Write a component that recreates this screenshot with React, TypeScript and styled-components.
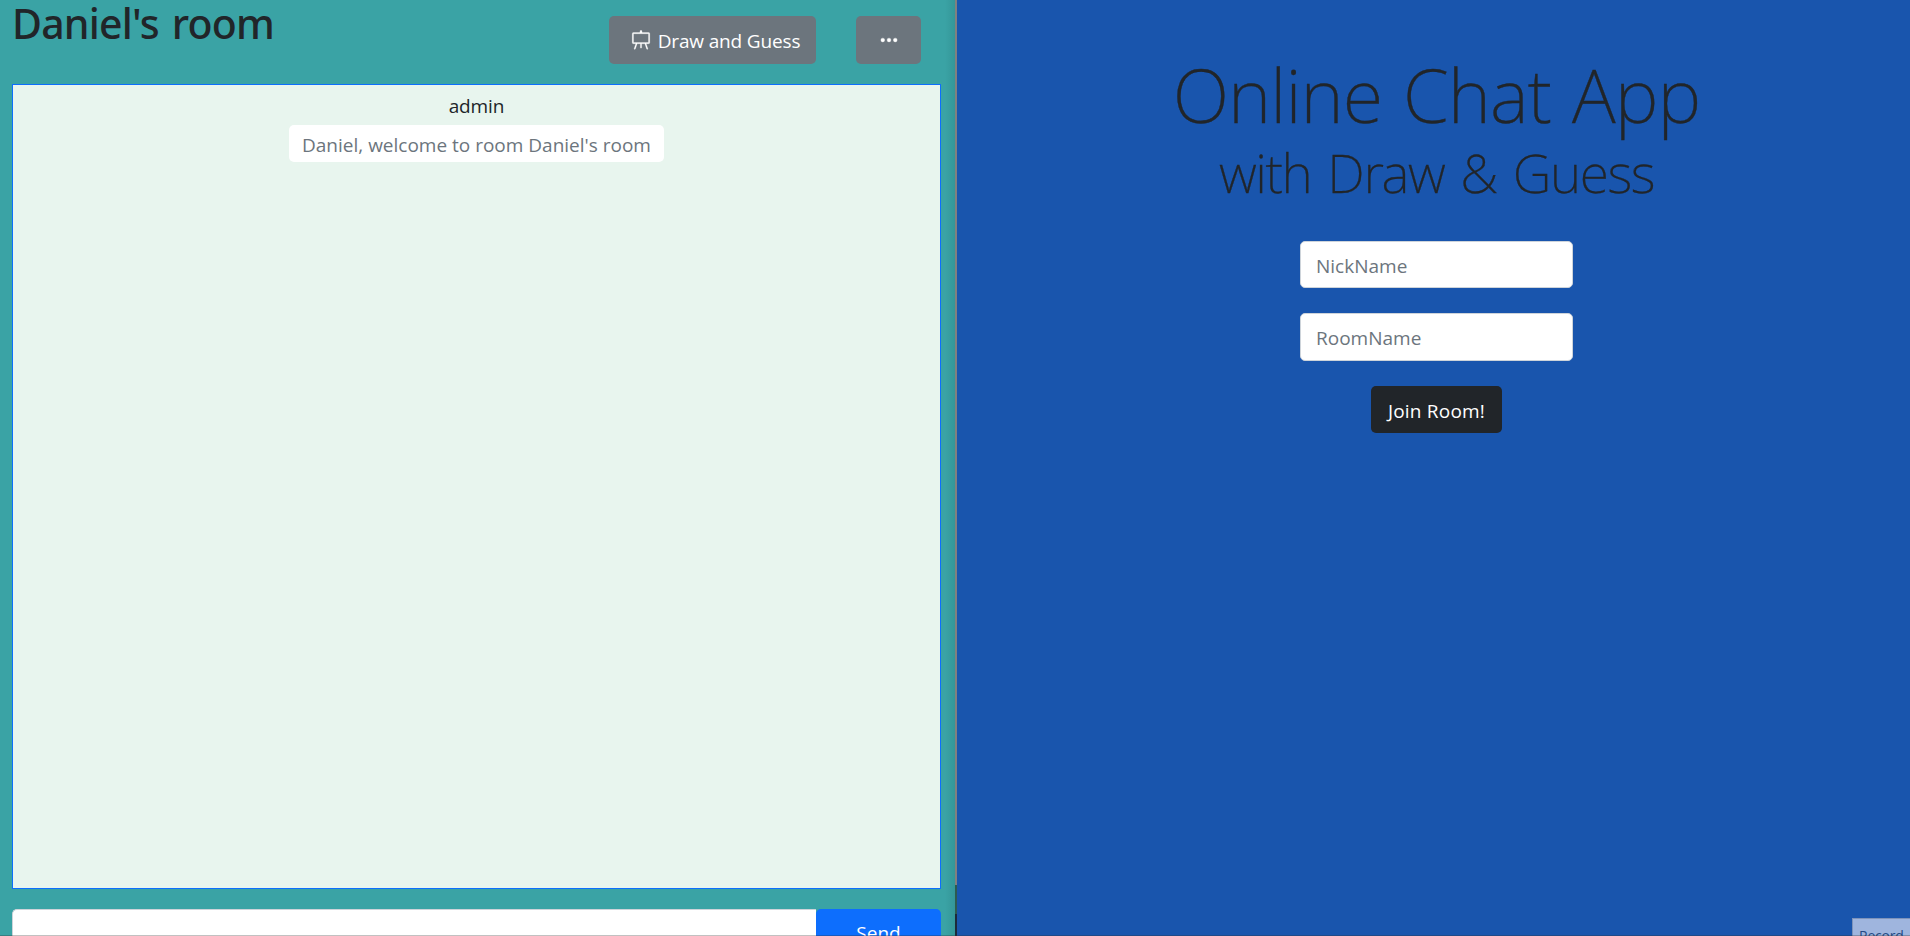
import React from 'react';
import styled, { createGlobalStyle } from 'styled-components';

const GlobalStyle = createGlobalStyle`
  *, *::before, *::after { box-sizing: border-box; }
  body {
    margin: 0;
    overflow: hidden;
    font-family: "Open Sans", "Noto Sans", sans-serif;
    font-size: 19px;
    line-height: 30px;
    color: #212529;
  }
  button, input { font: inherit; letter-spacing: inherit; }
`;

const Screen = styled.div`
  position: relative;
  display: flex;
  width: 1910px;
  height: 936px;
  overflow: hidden;
`;

const ChatPane = styled.section`
  display: flex;
  flex-direction: column;
  flex: none;
  width: 955px;
  height: 936px;
  padding: 0 14px 0 12px;
  background: linear-gradient(to right, transparent 945px, rgba(0, 40, 40, 0.1)) #3aa3a5;
`;

const ChatHeader = styled.header`
  display: flex;
  flex: none;
  height: 84px;
`;

const RoomTitle = styled.h1`
  flex: 1;
  margin: 0;
  font-family: "Noto Sans", "Open Sans", sans-serif;
  font-size: 41px;
  font-weight: 500;
  line-height: 46px;
  letter-spacing: -0.8px;
  word-spacing: 3px;
  white-space: nowrap;
`;

const HeaderButton = styled.button<{ $width: number }>`
  display: flex;
  align-items: center;
  justify-content: center;
  gap: 7px;
  width: ${(p) => p.$width}px;
  height: 48px;
  margin: 16px 0 0;
  padding: 0;
  border: 0;
  border-radius: 5px;
  background: #6c757d;
  color: #fff;
  white-space: nowrap;
`;

const ButtonLabel = styled.span`
  padding-top: 2px;
  letter-spacing: -0.15px;
`;

const DrawButton = styled(HeaderButton)`
  padding-left: 6px;
`;

const HeaderActions = styled.div`
  display: flex;
  gap: 40px;
  padding-right: 20px;
`;

const Messages = styled.div`
  display: flex;
  flex-direction: column;
  align-items: center;
  flex: none;
  height: 805px;
  padding-top: 6px;
  border: 1px solid #0d6efd;
  background: #e8f5ee;
`;

const Sender = styled.div`
  height: 34px;
  letter-spacing: -0.1px;
`;

const Bubble = styled.div`
  width: 375px;
  height: 37px;
  border-radius: 5px;
  background: #fff;
  color: #6c757d;
  line-height: 40px;
  text-align: center;
  white-space: nowrap;
`;

const Composer = styled.form`
  display: flex;
  flex: none;
  height: 48px;
  margin-top: 20px;
`;

const MessageInput = styled.input`
  flex: 1;
  min-width: 0;
  border: 1px solid #ced4da;
  border-right: 0;
  border-radius: 5px 0 0 5px;
  background: #fff;
  outline: 0;
`;

const SendButton = styled.button`
  width: 125px;
  padding: 0;
  border: 0;
  border-radius: 5px;
  background: #0d6efd;
  color: #fff;
`;

const Divider = styled.div`
  flex: none;
  width: 2px;
  background: linear-gradient(#808080 885px, #2d5a50 885px 914px, #1c2a3a 914px);
`;

const JoinPane = styled.section`
  display: flex;
  flex-direction: column;
  align-items: center;
  flex: 1;
  padding: 50px 0 0 6px;
  background: #1955ad;
`;

const AppTitle = styled.h1`
  margin: 0;
  font-family: "Noto Sans", "Open Sans", sans-serif;
  font-size: 74px;
  font-weight: 200;
  line-height: 90px;
  letter-spacing: -0.9px;
  word-spacing: 2.5px;
  white-space: nowrap;
  -webkit-text-stroke: 0.4px #212529;
`;

const AppSubtitle = styled.h2`
  margin: 0 0 29px;
  font-family: "Noto Sans", "Open Sans", sans-serif;
  font-size: 53.5px;
  font-weight: 200;
  line-height: 65px;
  letter-spacing: -1.4px;
  word-spacing: 3.5px;
  white-space: nowrap;
  -webkit-text-stroke: 0.3px #212529;
`;

const JoinForm = styled.form`
  display: flex;
  flex-direction: column;
  align-items: center;
  gap: 25px;
  margin-top: 7px;
`;

const Field = styled.input<{ $height: number }>`
  width: 273px;
  height: ${(p) => p.$height}px;
  padding: 2px 15px 0;
  border: 1px solid #ced4da;
  border-radius: 5px;
  background: #fff;
  outline: 0;
  &::placeholder { color: #6c757d; opacity: 1; }
`;

const JoinButton = styled.button`
  width: 131px;
  height: 47px;
  padding: 2px 0 0;
  border: 0;
  border-radius: 5px;
  background: #212529;
  color: #fff;
  letter-spacing: 0.2px;
  white-space: nowrap;
`;

const RecordTag = styled.div`
  position: absolute;
  left: 1852px;
  top: 918px;
  width: 58px;
  height: 18px;
  padding: 6px 0 0 6px;
  overflow: hidden;
  border: solid #7d93bb;
  border-width: 1px 0 0 1px;
  background: #9fb5de;
  color: #244a85;
  font-size: 14px;
  line-height: 22px;
  letter-spacing: -0.2px;
`;

const BottomEdge = styled.div`
  position: absolute;
  left: 0;
  right: 0;
  bottom: 0;
  height: 1px;
  background: rgba(50, 50, 50, 0.3);
`;

const EaselIcon = () => (
  <svg width="20" height="20" viewBox="0 0 16 16" fill="currentColor" stroke="currentColor" strokeWidth="0.2">
    <path d="M8 0a.5.5 0 0 1 .473.337L9.046 2H14a1 1 0 0 1 1 1v7a1 1 0 0 1-1 1h-1.85l1.323 3.837a.5.5 0 1 1-.946.326L11.092 11H8.5v3a.5.5 0 0 1-1 0v-3H4.908l-1.435 4.163a.5.5 0 1 1-.946-.326L3.85 11H2a1 1 0 0 1-1-1V3a1 1 0 0 1 1-1h4.954L7.527.337A.5.5 0 0 1 8 0M2 3v7h12V3z" />
  </svg>
);

const DotsIcon = () => (
  <svg width="20" height="20" viewBox="0 0 16 16" fill="currentColor" stroke="currentColor" strokeWidth="0.3">
    <path d="M3 9.5a1.5 1.5 0 1 1 0-3 1.5 1.5 0 0 1 0 3m5 0a1.5 1.5 0 1 1 0-3 1.5 1.5 0 0 1 0 3m5 0a1.5 1.5 0 1 1 0-3 1.5 1.5 0 0 1 0 3" />
  </svg>
);

export default function App() {
  return (
    <Screen>
      <GlobalStyle />
      <ChatPane>
        <ChatHeader>
          <RoomTitle>Daniel's room</RoomTitle>
          <HeaderActions>
            <DrawButton $width={207}>
              <EaselIcon />
              <ButtonLabel>Draw and Guess</ButtonLabel>
            </DrawButton>
            <HeaderButton $width={65} aria-label="More">
              <DotsIcon />
            </HeaderButton>
          </HeaderActions>
        </ChatHeader>
        <Messages>
          <Sender>admin</Sender>
          <Bubble>Daniel, welcome to room Daniel's room</Bubble>
        </Messages>
        <Composer>
          <MessageInput />
          <SendButton type="button">Send</SendButton>
        </Composer>
      </ChatPane>
      <Divider />
      <JoinPane>
        <AppTitle>Online Chat App</AppTitle>
        <AppSubtitle>with Draw &amp; Guess</AppSubtitle>
        <JoinForm>
          <Field $height={47} placeholder="NickName" />
          <Field $height={48} placeholder="RoomName" />
          <JoinButton type="button">Join Room!</JoinButton>
        </JoinForm>
      </JoinPane>
      <RecordTag>Record</RecordTag>
      <BottomEdge />
    </Screen>
  );
}
